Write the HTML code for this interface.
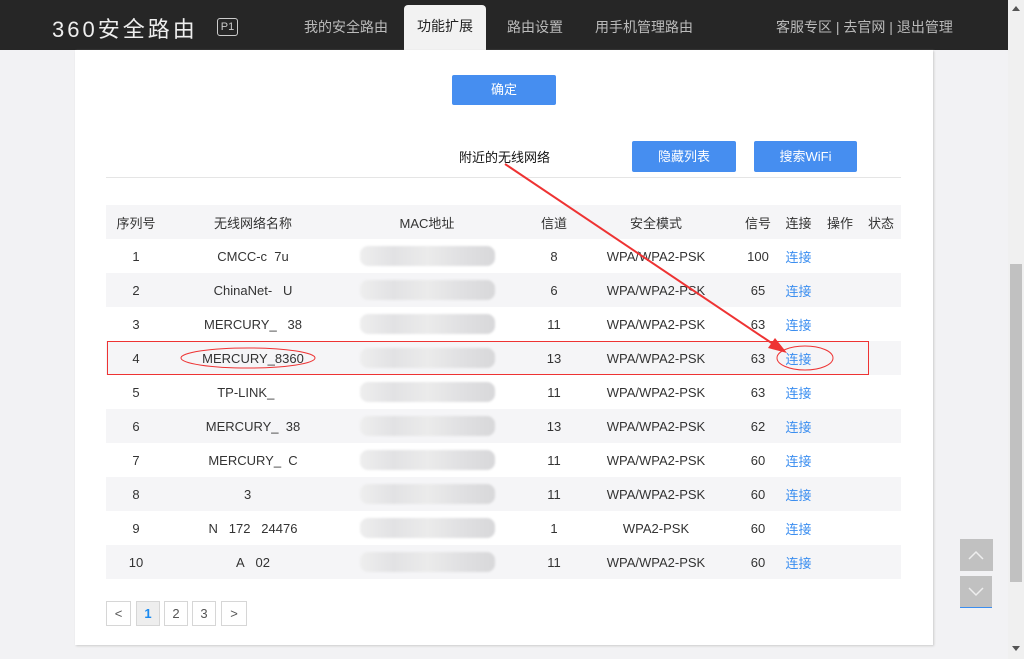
<!DOCTYPE html>
<html><head><meta charset="utf-8"><style>
*{margin:0;padding:0;box-sizing:border-box}
body{width:1024px;height:659px;overflow:hidden;background:#f2f2f4;font-family:"Liberation Sans","Noto Sans CJK SC",sans-serif;position:relative;color:#333;font-size:13px}
.hdr{position:absolute;left:0;top:0;width:1008px;height:50px;background:#262626}
.a{position:absolute;white-space:nowrap}
.nav{color:#bbb;font-size:14px;top:17px}
.panel{position:absolute;left:75px;top:50px;width:858px;height:595px;background:#fff;box-shadow:1px 1px 2px #ccc}
.btn{position:absolute;background:#468ef0;color:#fff;text-align:center;border-radius:2px;font-size:13px}
table{position:absolute;left:106px;top:205px;width:795px;border-collapse:collapse;table-layout:fixed}
td{height:34px;text-align:center;font-size:13px;color:#333;padding:0;white-space:nowrap}
td:nth-child(5){padding-right:20px}
tr:nth-child(odd){background:#f5f5f7}
.l{color:#3b8ef0}
.blur{display:inline-block;width:135px;height:20px;background:linear-gradient(90deg,#eee,#e2e2e4,#ebebeb,#e0e0e2,#d8d8da);border-radius:8px;filter:blur(1px);vertical-align:middle}
.pg{position:absolute;top:601px;height:25px;border:1px solid #d6d6d6;text-align:center;line-height:23px;font-size:13px;color:#555;background:#fff}
</style></head><body>
<div class="hdr"></div>
<div class="a" style="left:52px;top:12px;font-size:22px;color:#eee;letter-spacing:3px">360安全路由</div>
<div class="a" style="left:217px;top:18px;width:21px;height:18px;border:1px solid #ccc;border-radius:3px;color:#ccc;font-size:11px;text-align:center;line-height:16px">P1</div>
<div class="a nav" style="left:304px">我的安全路由</div>
<div class="a" style="left:404px;top:5px;width:82px;height:45px;background:#f2f2f2;border-radius:4px 4px 0 0;color:#222;font-size:14px;text-align:center;line-height:42px">功能扩展</div>
<div class="a nav" style="left:507px">路由设置</div>
<div class="a nav" style="left:595px">用手机管理路由</div>
<div class="a nav" style="left:776px">客服专区 | 去官网 | 退出管理</div>
<div style="position:absolute;left:1008px;top:0;width:16px;height:659px;background:#f0f0f0"></div>
<div style="position:absolute;left:1010px;top:264px;width:12px;height:318px;background:#c1c1c1"></div>
<div class="panel"></div>
<div class="btn" style="left:452px;top:75px;width:104px;height:30px;line-height:30px">确定</div>
<div class="a" style="left:459px;top:147px;font-size:13px;color:#111">附近的无线网络</div>
<div class="btn" style="left:632px;top:141px;width:104px;height:31px;line-height:31px">隐藏列表</div>
<div class="btn" style="left:754px;top:141px;width:103px;height:31px;line-height:31px">搜索WiFi</div>
<div style="position:absolute;left:106px;top:177px;width:795px;height:1px;background:#e5e5e5"></div>
<table>
<colgroup><col style="width:60px"><col style="width:174px"><col style="width:174px"><col style="width:80px"><col style="width:144px"><col style="width:40px"><col style="width:41px"><col style="width:42px"><col style="width:40px"></colgroup>
<tr><td>序列号</td><td>无线网络名称</td><td>MAC地址</td><td>信道</td><td>安全模式</td><td>信号</td><td>连接</td><td>操作</td><td>状态</td></tr>
<tr><td>1</td><td>CMCC-c&nbsp;&nbsp;7u</td><td><span class="blur"></span></td><td>8</td><td>WPA/WPA2-PSK</td><td>100</td><td class="l">连接</td><td></td><td></td></tr>
<tr><td>2</td><td>ChinaNet-&nbsp;&nbsp;&nbsp;U</td><td><span class="blur"></span></td><td>6</td><td>WPA/WPA2-PSK</td><td>65</td><td class="l">连接</td><td></td><td></td></tr>
<tr><td>3</td><td>MERCURY_&nbsp;&nbsp;&nbsp;38</td><td><span class="blur"></span></td><td>11</td><td>WPA/WPA2-PSK</td><td>63</td><td class="l">连接</td><td></td><td></td></tr>
<tr><td>4</td><td>MERCURY_8360</td><td><span class="blur"></span></td><td>13</td><td>WPA/WPA2-PSK</td><td>63</td><td class="l">连接</td><td></td><td></td></tr>
<tr><td>5</td><td>TP-LINK_&nbsp;&nbsp;&nbsp;&nbsp;</td><td><span class="blur"></span></td><td>11</td><td>WPA/WPA2-PSK</td><td>63</td><td class="l">连接</td><td></td><td></td></tr>
<tr><td>6</td><td>MERCURY_&nbsp;&nbsp;38</td><td><span class="blur"></span></td><td>13</td><td>WPA/WPA2-PSK</td><td>62</td><td class="l">连接</td><td></td><td></td></tr>
<tr><td>7</td><td>MERCURY_&nbsp;&nbsp;C</td><td><span class="blur"></span></td><td>11</td><td>WPA/WPA2-PSK</td><td>60</td><td class="l">连接</td><td></td><td></td></tr>
<tr><td>8</td><td>3&nbsp;&nbsp;&nbsp;</td><td><span class="blur"></span></td><td>11</td><td>WPA/WPA2-PSK</td><td>60</td><td class="l">连接</td><td></td><td></td></tr>
<tr><td>9</td><td>N&nbsp;&nbsp;&nbsp;172&nbsp;&nbsp;&nbsp;24476</td><td><span class="blur"></span></td><td>1</td><td>WPA2-PSK</td><td>60</td><td class="l">连接</td><td></td><td></td></tr>
<tr><td>10</td><td>A&nbsp;&nbsp;&nbsp;02</td><td><span class="blur"></span></td><td>11</td><td>WPA/WPA2-PSK</td><td>60</td><td class="l">连接</td><td></td><td></td></tr>
</table>
<svg style="position:absolute;left:0;top:0" width="1024" height="659">
<rect x="107.5" y="341.5" width="761" height="33" fill="none" stroke="#e33" stroke-width="1"/>
<ellipse cx="248" cy="358" rx="67" ry="10" fill="none" stroke="#e33"/>
<ellipse cx="805" cy="358" rx="28" ry="12" fill="none" stroke="#e33"/>
<line x1="505" y1="164" x2="776" y2="346" stroke="#e33" stroke-width="2"/>
<polygon points="787,353 768,348 775,338" fill="#e33"/>
<rect x="960" y="539" width="33" height="32" fill="#c1c1c1"/>
<polyline points="969,559 976,552 983,559" fill="none" stroke="#eee" stroke-width="1.5"/>
<rect x="960" y="576" width="32" height="32" fill="#c1c1c1"/>
<polyline points="969,588 976,595 983,588" fill="none" stroke="#eee" stroke-width="1.5"/>
<rect x="960" y="607" width="32" height="1" fill="#3b8ef0"/>
<polygon points="1012,11 1020,11 1016,6" fill="#555"/>
<polygon points="1012,646 1020,646 1016,651" fill="#555"/>
</svg>
<div class="pg" style="left:106px;width:25px">&lt;</div>
<div class="pg" style="left:136px;width:24px;background:#eee;color:#1a8af0;font-weight:bold">1</div>
<div class="pg" style="left:164px;width:24px">2</div>
<div class="pg" style="left:192px;width:24px">3</div>
<div class="pg" style="left:221px;width:26px">&gt;</div>
</body></html>
